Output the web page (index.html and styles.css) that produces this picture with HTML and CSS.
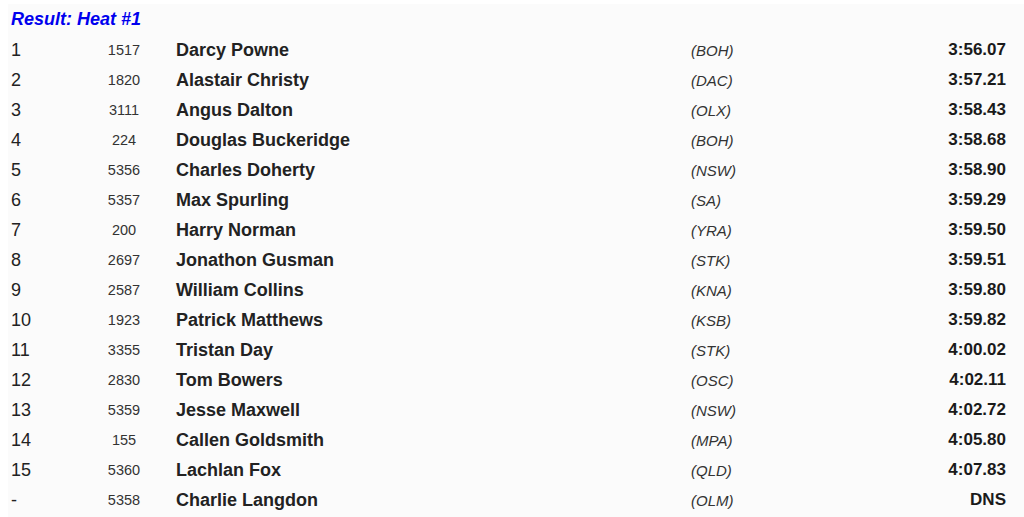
FILE: index.html
```html
<!DOCTYPE html>
<html>
<head>
<meta charset="utf-8">
<link rel="stylesheet" href="styles.css">
</head>
<body>
<div class="sheet">
  <h2 class="title">Result: Heat #1</h2>
  <table class="results">
    <tbody>
      <tr><td class="pl">1</td><td class="no">1517</td><td class="nm">Darcy Powne</td><td class="cl">(BOH)</td><td class="tm">3:56.07</td></tr>
      <tr><td class="pl">2</td><td class="no">1820</td><td class="nm">Alastair Christy</td><td class="cl">(DAC)</td><td class="tm">3:57.21</td></tr>
      <tr><td class="pl">3</td><td class="no">3111</td><td class="nm">Angus Dalton</td><td class="cl">(OLX)</td><td class="tm">3:58.43</td></tr>
      <tr><td class="pl">4</td><td class="no">224</td><td class="nm">Douglas Buckeridge</td><td class="cl">(BOH)</td><td class="tm">3:58.68</td></tr>
      <tr><td class="pl">5</td><td class="no">5356</td><td class="nm">Charles Doherty</td><td class="cl">(NSW)</td><td class="tm">3:58.90</td></tr>
      <tr><td class="pl">6</td><td class="no">5357</td><td class="nm">Max Spurling</td><td class="cl">(SA)</td><td class="tm">3:59.29</td></tr>
      <tr><td class="pl">7</td><td class="no">200</td><td class="nm">Harry Norman</td><td class="cl">(YRA)</td><td class="tm">3:59.50</td></tr>
      <tr><td class="pl">8</td><td class="no">2697</td><td class="nm">Jonathon Gusman</td><td class="cl">(STK)</td><td class="tm">3:59.51</td></tr>
      <tr><td class="pl">9</td><td class="no">2587</td><td class="nm">William Collins</td><td class="cl">(KNA)</td><td class="tm">3:59.80</td></tr>
      <tr><td class="pl">10</td><td class="no">1923</td><td class="nm">Patrick Matthews</td><td class="cl">(KSB)</td><td class="tm">3:59.82</td></tr>
      <tr><td class="pl">11</td><td class="no">3355</td><td class="nm">Tristan Day</td><td class="cl">(STK)</td><td class="tm">4:00.02</td></tr>
      <tr><td class="pl">12</td><td class="no">2830</td><td class="nm">Tom Bowers</td><td class="cl">(OSC)</td><td class="tm">4:02.11</td></tr>
      <tr><td class="pl">13</td><td class="no">5359</td><td class="nm">Jesse Maxwell</td><td class="cl">(NSW)</td><td class="tm">4:02.72</td></tr>
      <tr><td class="pl">14</td><td class="no">155</td><td class="nm">Callen Goldsmith</td><td class="cl">(MPA)</td><td class="tm">4:05.80</td></tr>
      <tr><td class="pl">15</td><td class="no">5360</td><td class="nm">Lachlan Fox</td><td class="cl">(QLD)</td><td class="tm">4:07.83</td></tr>
      <tr><td class="pl">-</td><td class="no">5358</td><td class="nm">Charlie Langdon</td><td class="cl">(OLM)</td><td class="tm">DNS</td></tr>
    </tbody>
  </table>
</div>
</body>
</html>
```
FILE: styles.css
```css
html, body {
  margin: 0;
  padding: 0;
  background: #ffffff;
}
body {
  padding: 4px 0 0 8px;
  font-family: "Liberation Sans", Arial, sans-serif;
  color: #222222;
}
.sheet {
  background: #fbfbfb;
  width: 1016px;
  padding: 0 0 10px 3px;
  box-sizing: border-box;
}
.title {
  margin: 0;
  padding-top: 2px;
  height: 31px;
  box-sizing: border-box;
  font-size: 18px;
  font-weight: bold;
  font-style: italic;
  color: #0000ee;
  line-height: 26px;
}
.results {
  border-collapse: collapse;
  width: 995px;
}
.results td {
  height: 30px;
  padding: 0;
  vertical-align: middle;
}
.pl {
  width: 80px;
  font-size: 18px;
  color: #222;
}
.no {
  width: 66px;
  font-size: 14.5px;
  text-align: center;
  color: #333;
}
.results td.nm {
  width: 515px;
  padding-left: 19px;
  font-size: 18px;
  font-weight: bold;
  color: #222;
}
.cl {
  width: 150px;
  font-size: 15px;
  font-style: italic;
  color: #333;
}
.tm {
  text-align: right;
  font-size: 17px;
  font-weight: bold;
  color: #1a1a1a;
}
```
